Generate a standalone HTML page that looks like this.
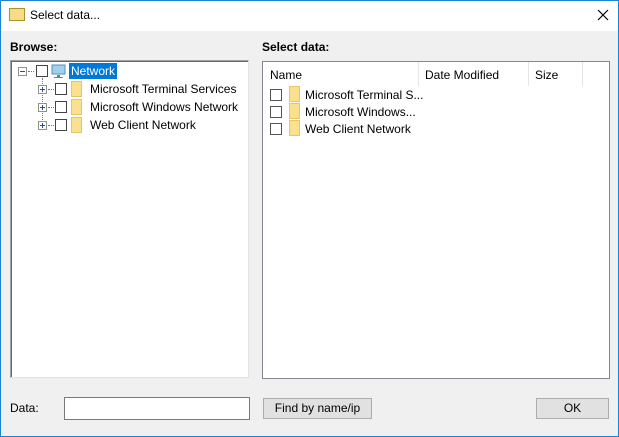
<!DOCTYPE html><html><head><style>
*{margin:0;padding:0;box-sizing:border-box}
body{width:619px;height:437px;overflow:hidden;font-family:"Liberation Sans",sans-serif;font-size:12px;color:#000;background:#f0f0f0;position:relative}
.frame{position:absolute;left:0;top:0;width:619px;height:437px;border:1px solid #1883d7;z-index:5;pointer-events:none}
.title{position:absolute;left:0;top:0;width:619px;height:31px;background:#fff}
.a{position:absolute;white-space:nowrap}
.cb{position:absolute;width:12px;height:12px;border:1px solid #444;background:#fff}
.fd{position:absolute;width:11px;height:16px;background:#fbe08e;border:1px solid #e8c56a}
.pl{position:absolute;width:9px;height:9px;border:1px solid #919191;background:#fff}
.pl:before{content:"";position:absolute;left:1px;top:3px;width:5px;height:1px;background:#2650a0}
.pl.p:after{content:"";position:absolute;left:3px;top:1px;width:1px;height:5px;background:#2650a0}
.dh{position:absolute;border-top:1px dotted #777;width:6px;height:0}
.btn{position:absolute;background:#e1e1e1;border:1px solid #adadad;text-align:center;line-height:19px}
</style></head><body>
<div class="frame"></div>
<div class="title"></div>
<div class="fd" style="left:9px;top:8px;width:16px;height:13px;background:#f5dc86;border-color:#b0902a"></div>
<div class="a" style="left:30px;top:8px;font-size:12px">Select data...</div>
<svg class="a" style="left:597px;top:9px" width="12" height="12"><path d="M1 1L11 11M11 1L1 11" stroke="#000" stroke-width="1.2"/></svg>
<div class="a" style="left:10px;top:40px;font-weight:bold">Browse:</div>
<div class="a" style="left:262px;top:40px;font-weight:bold">Select data:</div>
<div class="a" style="left:10px;top:60px;width:239px;height:318px;background:#fff;border:1px solid;border-color:#a0a0a0 #e3e3e3 #e3e3e3 #a0a0a0;box-shadow:inset 1px 1px 0 #696969"></div>
<div class="pl" style="left:18px;top:67px"></div><div class="dh" style="left:28px;top:71px"></div>
<div class="cb" style="left:36px;top:65px"></div>
<svg class="a" style="left:51px;top:64px" width="16" height="15"><rect x="1" y="1" width="13" height="9" fill="#9fd0f0" stroke="#5a8fb8"/><rect x="6" y="11" width="3" height="2" fill="#2aa0a0"/><rect x="3" y="13" width="9" height="1" fill="#2aa0a0"/></svg>
<div class="a" style="left:69px;top:63px;background:#0078d7;color:#fff;padding:1px 2px;font-size:12px">Network</div>
<div class="a" style="left:42px;top:78px;height:48px;border-left:1px dotted #777"></div>
<div class="pl p" style="left:38px;top:85px"></div><div class="dh" style="left:48px;top:89px"></div><div class="cb" style="left:55px;top:83px"></div><div class="fd" style="left:71px;top:81px"></div><div class="a" style="left:90px;top:82px">Microsoft Terminal Services</div>
<div class="pl p" style="left:38px;top:103px"></div><div class="dh" style="left:48px;top:107px"></div><div class="cb" style="left:55px;top:101px"></div><div class="fd" style="left:71px;top:99px"></div><div class="a" style="left:90px;top:100px">Microsoft Windows Network</div>
<div class="pl p" style="left:38px;top:121px"></div><div class="dh" style="left:48px;top:125px"></div><div class="cb" style="left:55px;top:119px"></div><div class="fd" style="left:71px;top:117px"></div><div class="a" style="left:90px;top:118px">Web Client Network</div>
<div class="a" style="left:262px;top:61px;width:348px;height:318px;background:#fff;border:1px solid #828790"></div>
<div class="a" style="left:418px;top:62px;height:24px;border-left:1px solid #e5e5e5"></div>
<div class="a" style="left:528px;top:62px;height:24px;border-left:1px solid #e5e5e5"></div>
<div class="a" style="left:582px;top:62px;height:24px;border-left:1px solid #e5e5e5"></div>
<div class="a" style="left:270px;top:68px">Name</div><div class="a" style="left:425px;top:68px">Date Modified</div><div class="a" style="left:535px;top:68px">Size</div>
<div class="cb" style="left:270px;top:89px;border-color:#555"></div><div class="fd" style="left:289px;top:86px"></div><div class="a" style="left:305px;top:88px">Microsoft Terminal S...</div>
<div class="cb" style="left:270px;top:106px;border-color:#555"></div><div class="fd" style="left:289px;top:103px"></div><div class="a" style="left:305px;top:105px">Microsoft Windows...</div>
<div class="cb" style="left:270px;top:123px;border-color:#555"></div><div class="fd" style="left:289px;top:120px"></div><div class="a" style="left:305px;top:122px">Web Client Network</div>
<div class="a" style="left:10px;top:401px">Data:</div>
<div class="a" style="left:64px;top:397px;width:186px;height:23px;background:#fff;border:1px solid #7a7a7a"></div>
<div class="btn" style="left:263px;top:398px;width:109px;height:21px">Find by name/ip</div>
<div class="btn" style="left:536px;top:398px;width:73px;height:21px">OK</div>
</body></html>
